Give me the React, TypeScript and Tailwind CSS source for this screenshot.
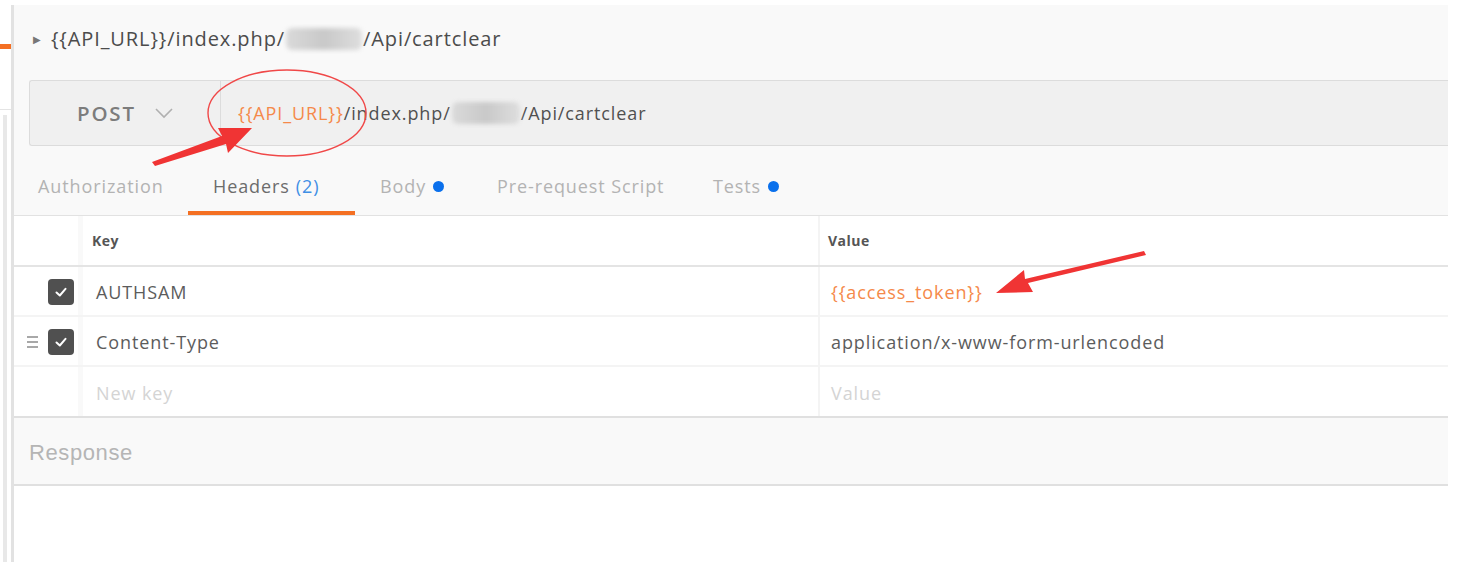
import React from 'react';

const Blur = ({ w }: { w: number }) => (
  <span
    className="inline-block align-middle h-[22px] mx-[1px] rounded-md bg-gradient-to-r from-[#dadada] via-[#c9c9c9] to-[#dedede] blur-[2px]"
    style={{ width: w }}
  />
);

const Check = () => (
  <div className="w-[26px] h-[26px] rounded-[4px] bg-[#505050] flex items-center justify-center">
    <svg width="14" height="14" viewBox="0 0 14 14" fill="none">
      <path d="M2.5 7.5 L5.8 10.5 L11.5 3.8" stroke="#fff" strokeWidth="2" strokeLinecap="round" strokeLinejoin="round" />
    </svg>
  </div>
);

const Handle = () => (
  <div className="flex flex-col gap-[3px] mr-[10px]">
    <span className="block w-[11px] h-[2px] bg-[#a8a8a8]" />
    <span className="block w-[11px] h-[2px] bg-[#a8a8a8]" />
    <span className="block w-[11px] h-[2px] bg-[#a8a8a8]" />
  </div>
);

const rows = [
  { key: 'AUTHSAM', value: '{{access_token}}', orange: true, handle: false },
  { key: 'Content-Type', value: 'application/x-www-form-urlencoded', orange: false, handle: true },
];

export default function App() {
  return (
    <div className="relative w-[1474px] h-[562px] bg-white overflow-hidden flex font-['Open_Sans',sans-serif] tracking-[0.9px]">
      {/* side strip */}
      <div className="w-[11px] flex flex-col">
        <div className="h-[44px]" />
        <div className="h-[5px] bg-[#f47023]" />
        <div className="h-[61px] border-b border-[#e4e4e4]" />
        <div className="flex-1 flex pt-[5px]">
          <div className="w-[3px]" />
          <div className="w-[4px] bg-[#e8e8e8]" />
        </div>
      </div>

      {/* main panel */}
      <div className="w-[1437px] mt-[5px] border-l-[3px] border-[#e2e2e2] flex flex-col">
        <div className="bg-[#f9f9f9]">
          {/* title */}
          <div className="h-[75px] flex items-center pl-[19px] pb-[7px] text-[20px] text-[#4c4c4c]">
            <span className="text-[10px] text-[#777] mr-[9px]">▶</span>
            <span>{'{{API_URL}}'}/index.php/</span>
            <Blur w={76} />
            <span>/Api/cartclear</span>
          </div>
          {/* url bar */}
          <div className="ml-[15px] h-[66px] flex border border-r-0 border-[#dcdcdc] rounded-l-[3px] bg-[#f0f0f0]">
            <div className="w-[191px] flex items-center pl-[47px] gap-[18px] border-r border-[#dcdcdc]">
              <span className="text-[20.5px] text-[#7c7c7c] font-semibold tracking-[1.8px]">POST</span>
              <svg width="20" height="12" viewBox="0 0 20 12" fill="none">
                <path d="M2 2 L10 10 L18 2" stroke="#b0b0b0" strokeWidth="1.6" />
              </svg>
            </div>
            <div className="flex items-center pl-[17px] text-[18px] text-[#505050]">
              <span className="text-[#f5894a]">{'{{API_URL}}'}</span>
              <span>/index.php/</span>
              <Blur w={68} />
              <span>/Api/cartclear</span>
            </div>
          </div>
          {/* tabs */}
          <div className="h-[70px] flex items-end text-[18px] text-[#b3b3b3] border-b border-[#e2e2e2]">
            <div className="w-[174px] pl-[24px] h-full flex items-center pt-[12px]">Authorization</div>
            <div className="w-[167px] pl-[25px] h-full flex items-center text-[#6c6c6c] border-b-[4px] border-[#f47023] pt-[16px]">
              Headers<span className="ml-[6px] text-[#3f8fe5]">(2)</span>
            </div>
            <div className="w-[117px] pl-[25px] h-full flex items-center pt-[12px]">
              Body<span className="ml-[7px] w-[11px] h-[11px] rounded-full bg-[#0a70ec]" />
            </div>
            <div className="w-[216px] pl-[25px] h-full flex items-center pt-[12px]">Pre-request Script</div>
            <div className="pl-[25px] h-full flex items-center pt-[12px]">
              Tests<span className="ml-[7px] w-[11px] h-[11px] rounded-full bg-[#0a70ec]" />
            </div>
          </div>
        </div>

        {/* table */}
        <div className="bg-white">
          <div className="h-[51px] flex border-b-2 border-[#e4e4e4] text-[14px] font-bold text-[#555] tracking-[0.5px]">
            <div className="w-[69px] border-r-[5px] border-[#f9f9f9]" />
            <div className="w-[737px] pl-[9px] flex items-center border-r-2 border-[#f4f4f4]">Key</div>
            <div className="flex-1 pl-[8px] flex items-center">Value</div>
          </div>
          {rows.map((r) => (
            <div key={r.key} className="h-[50px] flex border-b-2 border-[#f4f4f4] text-[18px] text-[#5c5c5c]">
              <div className="w-[69px] border-r-[5px] border-[#f9f9f9] flex items-center justify-end pr-[4px] pt-[1px]">
                {r.handle && <Handle />}
                <Check />
              </div>
              <div className="w-[737px] pl-[13px] flex items-center border-r-2 border-[#f4f4f4] pt-[3px]">{r.key}</div>
              <div className={`flex-1 pl-[11px] flex items-center pt-[3px] ${r.orange ? 'text-[#f5894a]' : ''}`}>{r.value}</div>
            </div>
          ))}
          <div className="h-[49px] flex text-[18px] text-[#d4d4d4]">
            <div className="w-[69px] border-r-[5px] border-[#f9f9f9]" />
            <div className="w-[737px] pl-[13px] flex items-center border-r-2 border-[#f4f4f4] pt-[3px]">New key</div>
            <div className="flex-1 pl-[11px] flex items-center pt-[3px]">Value</div>
          </div>
        </div>

        {/* response */}
        <div className="h-[70px] bg-[#f9f9f9] border-y-2 border-[#e0e0e0] flex items-center pl-[15px] pt-[2px] text-[22px] text-[#b5b5b5] tracking-[0.6px] font-['Liberation_Sans',sans-serif]">
          Response
        </div>
        <div className="flex-1 bg-white" />
      </div>

      {/* annotations */}
      <svg className="absolute left-0 top-0 pointer-events-none" width="1474" height="562">
        <ellipse cx="287" cy="113" rx="79" ry="43" fill="none" stroke="#f04848" strokeWidth="1.4" />
        <polygon points="152,162 222,136 218,128 252,128 228,153 226,144 155,166" fill="#f03434" />
        <polygon points="1146,255 1028,283 1033,292 996,293 1024,270 1025,279 1144,251" fill="#f03434" />
      </svg>
    </div>
  );
}
